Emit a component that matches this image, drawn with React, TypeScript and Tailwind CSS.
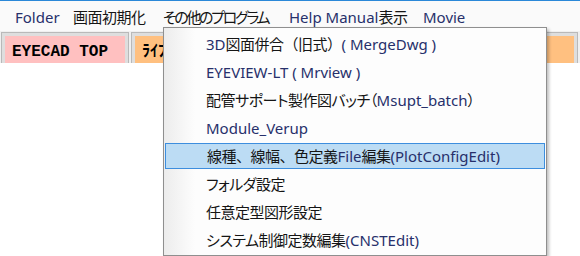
import type { ReactNode } from "react";

const MENUBAR = [
  { label: "Folder", w: "w-[58px]", t: "tracking-[-0.5px]" },
  { label: "画面初期化", w: "w-[90px]", t: "tracking-[-0.5px]" },
  { label: "その他のプログラム", w: "w-[126px]", t: "tracking-[-2.3px]" },
  { label: "Help Manual表示", w: "w-[134px]", t: "tracking-[-0.5px]" },
  { label: "Movie", w: "w-[60px]", t: "tracking-[-0.5px]" },
];

// full: keep full-width punctuation (、 and （） aren't squeezed in the original)
const ITEMS = [
  { text: "3D図面併合（旧式）( MergeDwg )", full: true },
  { text: "EYEVIEW-LT ( Mrview )", full: false },
  { text: "配管サポート製作図バッチ（Msupt_batch）", full: false },
  { text: "Module_Verup", full: false },
  { text: "線種、線幅、色定義File編集(PlotConfigEdit)", full: true },
  { text: "フォルダ設定", full: false },
  { text: "任意定型図形設定", full: false },
  { text: "システム制御定数編集(CNSTEdit)", full: false },
];

// latin runs come out navy-ish with cleartype in the original, kana/kanji near black
function label(s: string, cjk = "tracking-[-0.5px]"): ReactNode[] {
  return s
    .split(/([\x20-\x7E]+)/)
    .filter(Boolean)
    .map((p, i) =>
      /^[\x20-\x7E]+$/.test(p) ? (
        <span key={i} className="text-[#27306b]">
          {p}
        </span>
      ) : (
        <span key={i} className={cjk}>
          {p}
        </span>
      )
    );
}

export default function App() {
  return (
    <div className="relative h-[256px] w-[580px] overflow-hidden bg-white font-['Noto_Sans','Noto_Sans_CJK_JP',sans-serif] text-[15px] text-[#151515] [font-feature-settings:'palt']">
      <div className="h-px bg-[#2b88d8]" />

      {/* menu bar */}
      <div className="flex h-[30px] items-center bg-[#fafafa] pl-[15px] pt-[2px]">
        {MENUBAR.map((m) => (
          <span key={m.label} className={`${m.w} shrink-0 whitespace-nowrap`}>
            {label(m.label, m.t)}
          </span>
        ))}
      </div>

      {/* toolbar */}
      <div className="flex h-[32px] gap-[2px] overflow-hidden bg-[#f0f0f0] pl-px pt-px">
        <div className="h-[40px] w-[128px] shrink-0 border border-[#b9b9b9] bg-[#dedede] p-[3px]">
          <div className="flex h-full items-center bg-[#ffc0c0] pl-[7px] font-['Liberation_Mono',monospace] text-[16px] font-bold text-black">
            EYECAD TOP
          </div>
        </div>
        <div className="h-[40px] w-[447px] shrink-0 border border-[#b9b9b9] bg-[#dedede] p-[3px]">
          <div className="flex h-full items-center bg-[#ffc080] pl-[7px] font-['Liberation_Mono','Noto_Sans_CJK_JP',monospace] text-[16px] font-bold text-black">
            ﾗｲﾌﾞﾗﾘ
          </div>
        </div>
      </div>

      {/* dropdown */}
      <div className="absolute left-[163px] top-[27px] h-[229px] w-[384px] border border-[#8f8f8f] bg-[#fdfdfd] pt-[3px] shadow-[2px_2px_3px_rgba(0,0,0,0.25)]">
        <div className="absolute bottom-0 left-0 top-0 w-[31px] bg-gradient-to-r from-[#ececec] to-[#fdfdfd]" />
        {ITEMS.map((it, i) => (
          <div key={it.text} className="relative h-[28px]">
            <div
              className={`mx-px flex h-[26px] items-center whitespace-nowrap pl-[41px] ${
                it.full ? "[font-feature-settings:normal]" : ""
              } ${i === 4 ? "border border-[#3d8ede] bg-[#bcdcf4] pl-[40px]" : ""}`}
            >
              {label(it.text)}
            </div>
          </div>
        ))}
      </div>
    </div>
  );
}
